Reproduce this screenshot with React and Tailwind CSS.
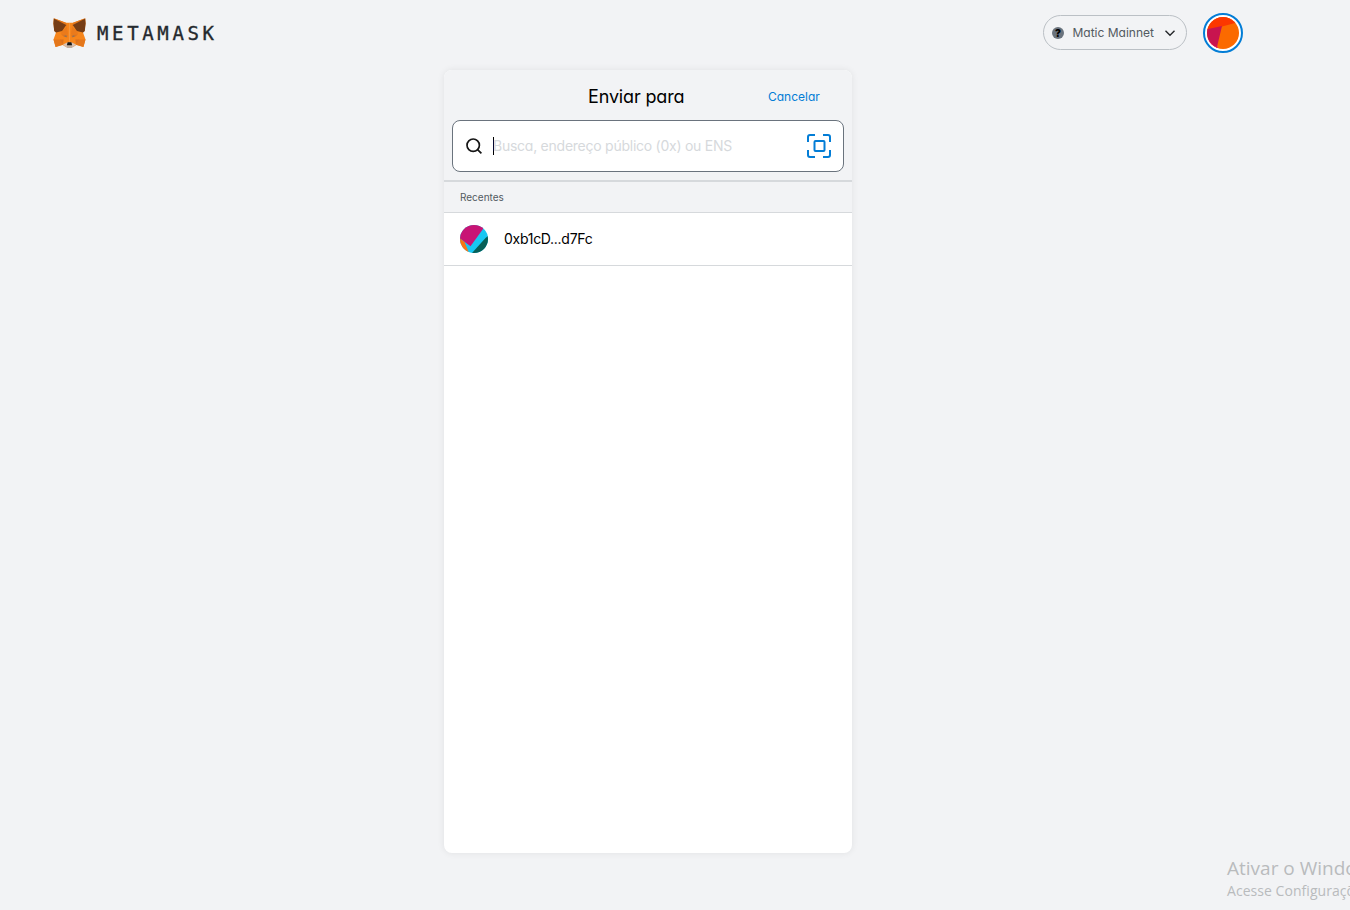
const foxHalf = [
  ['#F6851B', 'M.8.2 13 4.8H16.6V29H12.8L9.8 26.9 2.6 29 .5 21.6 3 14.6 1.4 13 .4 5.6Z'],
  ['#E2761B', 'M.8.2 13 4.8 14 8.4Z'],
  ['#763D16', 'M.8.6 13.2 7 9.2 12.9 3 14.4 1.2 13 .4 5.6Z'],
  ['#EA7A1B', 'M9.4 13 14 8.6 15 16 7.6 15.7Z'],
  ['#E4761B', 'M.5 21.6H7.6L10 26.6 2.6 29Z'],
  ['#D9701F', 'M7 21.6H10.6L10 26.4Z'],
  ['#DE741F', 'M8 16.2 14.8 16.6 14.2 19.6 10.6 18.6Z'],
  ['#77736C', 'M10.8 18 13 17.6 13.8 19.2Z'],
  ['#D7C1B3', 'M10 26.4 14.2 24.4H16.6V29.8H13.6Z'],
];

const foxMuzzle = [
  ['#C0AD9E', 'M13.4 28.2 14.4 27H18.6L19.6 28.2 18.8 29.9H14.2Z'],
  ['#161616', 'M14.6 24.3H18.4L19.1 27.3H13.9Z'],
];

function Fox() {
  return (
    <svg className="h-[30px] w-[33px]" viewBox="0 0 33 30">
      {foxHalf.map(([fill, d]) => (
        <path key={d} d={d} fill={fill} />
      ))}
      <g transform="translate(33 0) scale(-1 1)">
        {foxHalf.map(([fill, d]) => (
          <path key={d} d={d} fill={fill} />
        ))}
      </g>
      {foxMuzzle.map(([fill, d]) => (
        <path key={d} d={d} fill={fill} />
      ))}
    </svg>
  );
}

function Logo() {
  return (
    <div className="flex items-center">
      <Fox />
      <span className="ml-[11.5px] font-['DejaVu_Sans_Mono',monospace] text-[19px] leading-[30px] tracking-[3.65px] text-[#24292e] [-webkit-text-stroke:0.35px_#24292e]">
        METAMASK
      </span>
    </div>
  );
}

function NetworkPicker() {
  return (
    <div className="flex h-[35px] w-36 items-center rounded-full border border-[#bbc0c5] pl-2">
      <span className="flex size-3 items-center justify-center rounded-full bg-[#6a737d] text-[10px] leading-3 font-black text-black">?</span>
      <span className="ml-[8.5px] w-[88.5px] whitespace-nowrap text-[12px] text-[#535a61]">Matic Mainnet</span>
      <svg className="ml-[3px] size-3" viewBox="0 0 12 12" fill="none" stroke="#24272a" strokeWidth="1.4">
        <path d="M1.5 3.7 6 8.2l4.5-4.5" />
      </svg>
    </div>
  );
}

function AccountAvatar() {
  return (
    <svg className="size-10" viewBox="0 0 40 40">
      <clipPath id="account-clip">
        <circle cx="20" cy="20" r="16" />
      </clipPath>
      <circle cx="20" cy="20" r="19" fill="#fff" stroke="#037dd6" strokeWidth="2" />
      <g clipPath="url(#account-clip)">
        <rect width="40" height="40" fill="#fb6a00" />
        <path d="M0 0H40V8L19 13.5 0 18Z" fill="#fc3700" />
        <path d="M0 17.2 19 13 14 34 13 40H0Z" fill="#c8144f" />
        <path d="M3 25 11 33 15 34 13 40H0Z" fill="#f2146b" />
      </g>
    </svg>
  );
}

function RecipientAvatar() {
  return (
    <svg className="size-7" viewBox="0 0 28 28">
      <clipPath id="recipient-clip">
        <circle cx="14" cy="14" r="14" />
      </clipPath>
      <g clipPath="url(#recipient-clip)">
        <rect width="28" height="28" fill="#18c7f2" />
        <path d="M0 0H25L23 4 10.5 21.2 0 13.5Z" fill="#c81475" />
        <path d="M0 13.5 4.5 17 9 28H0Z" fill="#f97515" />
        <path d="M28 11V28H12L25.5 13Z" fill="#075f57" />
      </g>
    </svg>
  );
}

function SearchBox() {
  return (
    <div className="flex h-[52px] items-center rounded-lg border border-[#6a737d] bg-white pr-3 pl-[13px]">
      <svg className="size-4" viewBox="0 0 16 16" fill="none" stroke="#161616" strokeWidth="1.7">
        <circle cx="7.2" cy="7.2" r="6.2" />
        <path d="m11.6 11.6 3.8 3.8" />
      </svg>
      <span className="ml-[11px] h-[18px] w-px bg-black" />
      <span className="-ml-px flex-1 pb-px text-[14px] tracking-[-0.25px] whitespace-nowrap text-[#d6d9dc]">
        Busca, endereço público (0x) ou ENS
      </span>
      <svg className="size-6" viewBox="0 0 24 24" fill="none" stroke="#037dd6" strokeWidth="2">
        <path d="M1 8V3a2 2 0 0 1 2-2h5M16 1h5a2 2 0 0 1 2 2v5M23 16v5a2 2 0 0 1-2 2h-5M8 23H3a2 2 0 0 1-2-2v-5" />
        <rect x="7.5" y="7" width="10" height="10" rx="1" />
      </svg>
    </div>
  );
}

export default function App() {
  return (
    <div className="relative h-[910px] w-[1350px] overflow-hidden bg-[#f2f3f5] font-[Inter,sans-serif] [font-feature-settings:'cv11']">
      <header className="flex h-[70px] items-start justify-between pr-[107px] pl-[52.5px]">
        <div className="pt-[18px]">
          <Logo />
        </div>
        <div className="flex items-start gap-4 pt-[13px]">
          <div className="pt-0.5">
            <NetworkPicker />
          </div>
          <AccountAvatar />
        </div>
      </header>

      <main className="ml-[444px] h-[783px] w-[408px] overflow-hidden rounded-lg bg-white shadow-[0_0_7px_rgba(0,0,0,0.08)]">
        <section className="h-28 border-b-2 border-[#d6d9dc] bg-[#f2f3f5] px-2">
          <div className="grid h-[50px] grid-cols-[128px_1fr_76px] items-center pt-1">
            <h1 className="col-start-2 pl-2 text-[18px] leading-6 tracking-[-0.15px] whitespace-nowrap text-black">Enviar para</h1>
            <a className="text-[12px] leading-5 text-[#037dd6]">Cancelar</a>
          </div>
          <SearchBox />
        </section>
        <div className="flex h-[31px] items-center border-b border-[#d6d9dc] bg-[#f2f3f5] px-4 text-[10px] text-[#535a61]">Recentes</div>
        <div className="flex h-[53px] items-center gap-4 border-b border-[#d6d9dc] px-4">
          <RecipientAvatar />
          <span className="pb-0.5 text-[14px] tracking-[-0.28px] text-black">0xb1cD...d7Fc</span>
        </div>
      </main>

      <aside className="absolute top-[856px] left-[1227px] font-['Open_Sans',sans-serif] whitespace-nowrap text-[#b9bbbd]">
        <div className="text-[19px] leading-6">Ativar o Windows</div>
        <div className="text-[14px] leading-[21px] tracking-[0.05px]">Acesse Configurações para ativar o Windows.</div>
      </aside>
    </div>
  );
}
